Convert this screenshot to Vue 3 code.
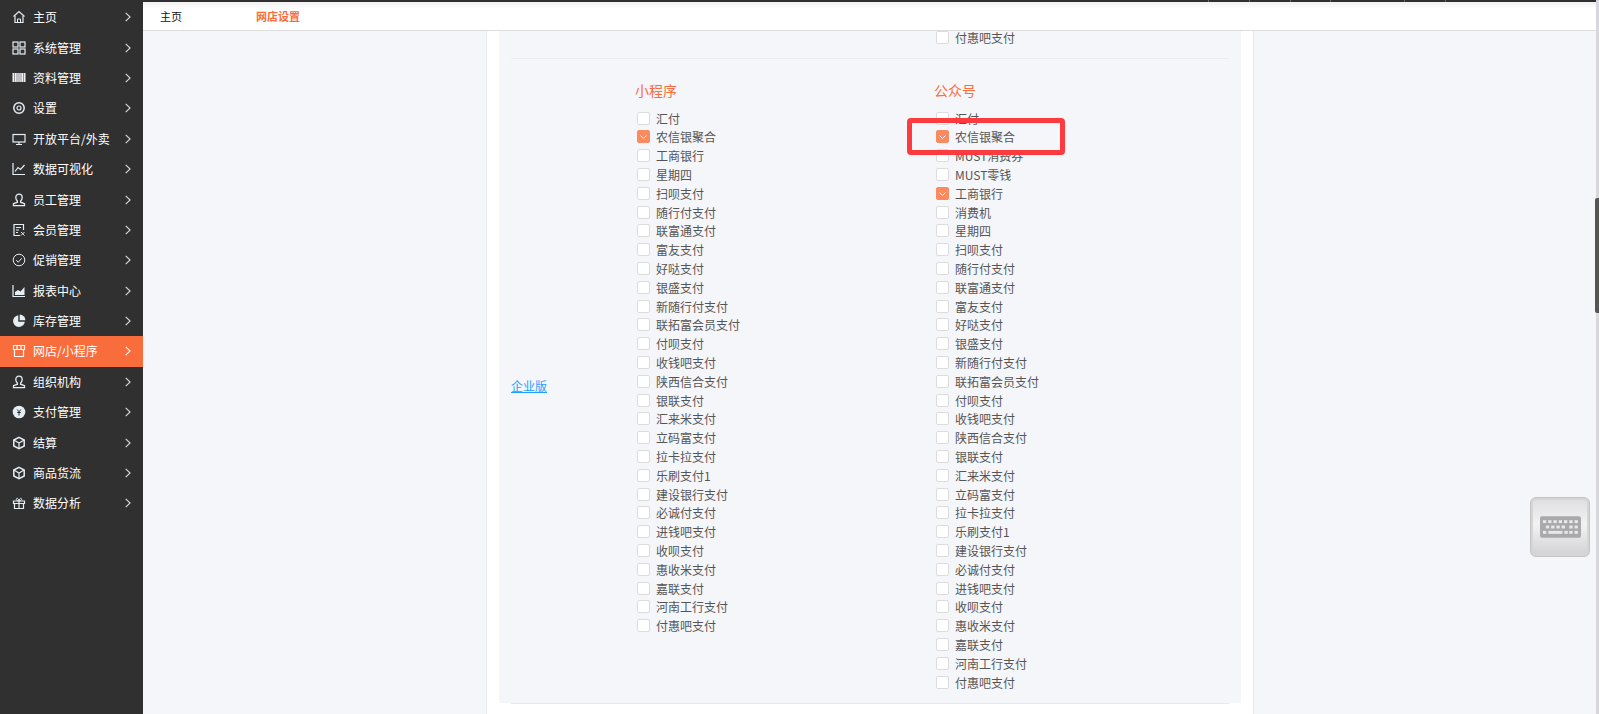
<script setup>
const menu = [
  ['主页', 'home'], ['系统管理', 'grid'], ['资料管理', 'barcode'], ['设置', 'gear'],
  ['开放平台/外卖', 'monitor'], ['数据可视化', 'chart'], ['员工管理', 'user'], ['会员管理', 'card'],
  ['促销管理', 'check'], ['报表中心', 'area'], ['库存管理', 'pie'], ['网店/小程序', 'shop'],
  ['组织机构', 'user'], ['支付管理', 'pay'], ['结算', 'box'], ['商品货流', 'box'], ['数据分析', 'gift']
]
const common = ['工商银行', '星期四', '扫呗支付', '随行付支付', '联富通支付', '富友支付', '好哒支付', '银盛支付', '新随行付支付', '联拓富会员支付', '付呗支付', '收钱吧支付', '陕西信合支付', '银联支付', '汇来米支付', '立码富支付', '拉卡拉支付', '乐刷支付1', '建设银行支付', '必诚付支付', '进钱吧支付', '收呗支付', '惠收米支付', '嘉联支付', '河南工行支付', '付惠吧支付']
const mini = ['汇付', '农信银聚合', ...common]
const officialBase = ['汇付', '农信银聚合', 'MUST消费券', 'MUST零钱', '工商银行', '消费机', ...common.slice(1)]
const miniChecked = ['农信银聚合']
const officialChecked = ['农信银聚合', '工商银行']
const ticks = [1208, 1249, 1290, 1330, 1404, 1445]
</script>

<template>
  <div class="page">
    <aside class="sidebar">
      <div v-for="m in menu" :key="m[0]" class="item" :class="{ active: m[0] === '网店/小程序' }">
        <svg class="icon" viewBox="0 0 14 14" fill="none" stroke="currentColor" stroke-width="1">
          <template v-if="m[1] === 'home'">
            <path d="M1.500 6.500 7 1.500l5.500 5" stroke-width="1.200" /><path d="M3 6v6.500h8V6" stroke-width="1.200" /><path d="M5.500 12.500V9h3v3.500" />
          </template>
          <template v-else-if="m[1] === 'grid'">
            <rect x="1" y="1" width="5" height="5" stroke-width="1.200" /><rect x="8" y="1" width="5" height="5" stroke-width="1.200" />
            <rect x="1" y="8" width="5" height="5" stroke-width="1.200" /><rect x="8" y="8" width="5" height="5" stroke-width="1.200" />
          </template>
          <template v-else-if="m[1] === 'barcode'">
            <path d="M.5 2h13v9H.5z" fill="#f0f0f4" stroke="none" />
            <path d="M2.500 2v9M5 2v9M7 2v9M9 2v9M11.500 2v9" stroke="#8f8f96" />
          </template>
          <template v-else-if="m[1] === 'gear'">
            <circle cx="7" cy="7" r="5.200" stroke-width="1.500" /><circle cx="7" cy="7" r="2" stroke-width="1.200" />
          </template>
          <template v-else-if="m[1] === 'monitor'">
            <rect x="1" y="2.500" width="12" height="7.500" stroke-width="1.200" /><path d="M4 12.500h6M7 10v2.500" stroke-width="1.200" />
          </template>
          <template v-else-if="m[1] === 'chart'">
            <path d="M1 1v11.500h12" stroke-width="1.200" /><path d="m3 9.500 3-4 2.500 2L12.500 3" stroke-width="1.200" />
          </template>
          <template v-else-if="m[1] === 'user'">
            <path stroke-width="1.300" d="M7 1.200c2 0 3.200 1.400 3.200 3.300 0 1.600-.7 2.700-1.600 3.500v1.200l3.900 1.400v2H1.500v-2l3.900-1.400V8C4.500 7.200 3.800 6.100 3.800 4.500 3.800 2.600 5 1.200 7 1.200z" />
          </template>
          <template v-else-if="m[1] === 'card'">
            <path d="M11.500 7V1.500h-9.500v11h6" stroke-width="1.200" /><path d="M4 4.500h5M4 7h3M4 9.500h2" stroke-width="1.200" /><path d="m9 9 3.500 3.500M12.500 9 9 12.500" />
          </template>
          <template v-else-if="m[1] === 'check'">
            <circle cx="7" cy="7" r="5.800" /><path d="m4.200 7.200 2 2 3.600-4" />
          </template>
          <template v-else-if="m[1] === 'area'">
            <path d="M1 1v11.500h12" stroke-width="1.200" /><path d="M3 11V8l3-2 2.500 1.500L12.500 3v8z" fill="currentColor" stroke="none" />
          </template>
          <template v-else-if="m[1] === 'pie'">
            <path d="M6.300 1.200a5.900 5.900 0 1 0 6.500 6.500H6.300z" fill="currentColor" stroke="none" />
            <path d="M7.700 .6v5.700h5.700A5.800 5.800 0 0 0 7.700 .6z" fill="currentColor" stroke="none" />
          </template>
          <template v-else-if="m[1] === 'shop'">
            <path d="M1.500 1.500h11v4h-11zM2.500 5.500v7h9v-7M5 1.500v4M9 1.500v4" stroke-width="1.200" />
          </template>
          <template v-else-if="m[1] === 'pay'">
            <circle cx="7" cy="7" r="6.300" fill="currentColor" stroke="none" />
            <path d="M5.200 4.500 7 6.800l1.800-2.300M5.200 7.500h3.600M7 6.800v3.700" stroke="#303030" />
          </template>
          <template v-else-if="m[1] === 'box'">
            <path d="M7 1.300 12.200 4v6L7 12.700 1.800 10V4z" stroke-width="1.500" /><path d="M1.800 4 7 7l5.200-3M7 7v5.700" stroke-width="1.200" />
          </template>
          <template v-else>
            <path d="M1.500 5h11v2.500h-11zM2.500 7.500v5h9v-5M7 5v7.500" stroke-width="1.200" /><path d="M7 5C5 5 3.800 3.800 4.500 2.700 5.300 1.600 6.800 3 7 5c.2-2 1.700-3.400 2.500-2.300C10.200 3.800 9 5 7 5z" />
          </template>
        </svg>
        <span class="label">{{ m[0] }}</span>
        <svg class="chevron" viewBox="0 0 6 10" fill="none" stroke="currentColor" stroke-width="1.100">
          <path d="m.7.8 4.400 4.200-4.400 4.200" />
        </svg>
      </div>
    </aside>

    <div class="main">
      <div class="strip">
        <i v-for="t in ticks" :key="t" class="tick" :style="{ left: t + 'px' }"></i>
      </div>
      <header class="topbar">
        <span class="tab">主页</span>
        <span class="tab current">网店设置</span>
      </header>
      <div class="content">
        <div class="card">
          <div class="panel">
            <div class="top-row">
              <label class="row"><span class="box"></span>付惠吧支付</label>
            </div>
            <section class="section">
              <a class="link">企业版</a>
              <div class="column">
                <h4>小程序</h4>
                <label v-for="n in mini" :key="n" class="row">
                  <span class="box" :class="{ on: miniChecked.includes(n) }">
                    <svg v-if="miniChecked.includes(n)" viewBox="0 0 13 13" fill="none" stroke="#fff" stroke-width="1"><path d="m3.500 5.500 3 3 3-3" /></svg>
                  </span>{{ n }}
                </label>
              </div>
              <div class="column">
                <h4>公众号</h4>
                <label v-for="n in officialBase" :key="n" class="row">
                  <span class="box" :class="{ on: officialChecked.includes(n) }">
                    <svg v-if="officialChecked.includes(n)" viewBox="0 0 13 13" fill="none" stroke="#fff" stroke-width="1"><path d="m3.500 5.500 3 3 3-3" /></svg>
                  </span>{{ n }}
                </label>
              </div>
            </section>
          </div>
          <div class="foot"></div>
        </div>
      </div>
    </div>

    <div class="scrollbar"><i class="thumb"></i></div>

    <div class="highlight"></div>

    <div class="keyboard">
      <svg viewBox="0 0 42 22" width="41" height="22">
        <rect width="42" height="22" rx="2" fill="#a9a9ab" />
        <g fill="#e8e8e9">
          <rect v-for="i in 7" :key="'a' + i" :x="3 + (i - 1) * 5.400" y="4" width="3.400" height="3" />
          <rect v-for="i in 4" :key="'b' + i" :x="6 + (i - 1) * 5.400" y="9.500" width="3.400" height="3" />
          <rect x="30" y="9.500" width="3.400" height="3" /><rect x="35.400" y="9.500" width="3.400" height="3" />
          <rect x="3" y="15" width="3.400" height="3" /><rect x="8.500" y="15" width="14.500" height="3" />
          <rect x="25" y="15" width="3.400" height="3" /><rect x="30" y="15" width="3.400" height="3" /><rect x="35.400" y="15" width="3.400" height="3" />
        </g>
      </svg>
    </div>
  </div>
</template>

<style>
html, body { margin: 0; height: 100%; overflow: hidden; }
</style>

<style scoped>
.page {
  position: relative;
  display: flex;
  width: 1599px;
  height: 714px;
  overflow: hidden;
  background: #f5f6fa;
  font-family: "Noto Sans CJK SC", "Noto Sans", sans-serif;
  font-size: 12px;
}
.sidebar {
  flex: 0 0 143px;
  box-sizing: border-box;
  padding-top: 2px;
  background: #303030;
  color: #fff;
}
.item {
  display: flex;
  align-items: center;
  height: 30.4px;
  padding: 0 12px 0 12px;
  box-sizing: border-box;
}
.item.active { background: #f96d3c; }
.icon { flex: none; width: 14px; height: 14px; color: #e6eef5; }
.active .icon { color: #fff; }
.label { flex: 1; margin-left: 7px; white-space: nowrap; line-height: 1; }
.chevron { flex: none; width: 6px; height: 10px; color: #dcdcdc; }
.active .chevron { color: #fff; }
.main {
  position: relative;
  flex: 1;
  min-width: 0;
  display: flex;
  flex-direction: column;
}
.strip { flex: 0 0 2px; background: #303030; }
.tick { position: absolute; top: 0; width: 1px; height: 2px; margin-left: -143px; background: #6a6a6a; }
.topbar {
  position: relative;
  z-index: 1;
  flex: 0 0 28px;
  display: flex;
  align-items: center;
  background: linear-gradient(#f1f1f1, #fff 7px);
  border-bottom: 1px solid #dcdcdc;
  padding-left: 17px;
  color: #111;
  font-size: 11px;
}
.tab { width: 96px; line-height: 1; }
.tab.current { color: #f96d3c; font-weight: 700; }
.content {
  flex: 1;
  min-height: 0;
  display: flex;
  justify-content: center;
}
.card {
  box-sizing: border-box;
  width: 768px;
  margin-left: 1px;
  padding: 0 12px;
  background: #fff;
  border-left: 1px solid #e8e9ed;
  border-right: 1px solid #e8e9ed;
  height: 683px;
}
.panel { background: #f5f6fa; padding: 0 12px; height: 672px; box-sizing: border-box; }
.top-row { padding: 0 0 14px 425px; border-bottom: 1px solid #ebecef; }
.top-row .row { height: 13px; line-height: 13px; }
.section {
  display: grid;
  grid-template-columns: 126px 299px 1fr;
  padding-top: 20px;
}
.link { align-self: center; color: #1e9fff; text-decoration: underline; }
.column { min-width: 0; }
h4 {
  margin: 0 0 7.800px -2px;
  font-size: 14px;
  font-weight: 400;
  line-height: 22px;
  color: #f96d3c;
}
.row {
  display: flex;
  align-items: center;
  height: 18.800px;
  color: #555;
  white-space: nowrap;
}
.box {
  flex: none;
  box-sizing: border-box;
  width: 13px;
  height: 13px;
  margin-right: 6px;
  background: #fff;
  border: 1px solid #dcdcdc;
  border-radius: 2px;
}
.box svg { display: block; width: 13px; height: 13px; margin: -1px; }
.box.on { background: #fb8a60; border-color: #fb8a60; }
.foot { height: 1px; margin: 0 12px; background: #e8e9ed; }
.scrollbar { position: relative; z-index: 2; flex: 0 0 3px; background: #d8d8dc; }
.thumb {
  position: absolute;
  top: 198px;
  left: -1px;
  width: 4px;
  height: 115px;
  background: #555;
  border-radius: 2px 0 0 2px;
}
.highlight {
  position: absolute;
  z-index: 3;
  left: 907px;
  top: 118px;
  width: 158px;
  height: 37px;
  box-sizing: border-box;
  border: 5px solid #fd3b3e;
  border-radius: 4px;
}
.keyboard {
  position: absolute;
  z-index: 3;
  left: 1530px;
  top: 497px;
  width: 60px;
  height: 60px;
  box-sizing: border-box;
  display: flex;
  align-items: center;
  justify-content: center;
  border: 1px solid #c4c4c6;
  border-radius: 6px;
  background: linear-gradient(#dedee0, #f2f2f3 45%, #d2d2d4);
  box-shadow: inset 0 0 0 2px #d6d6d8;
}
</style>
